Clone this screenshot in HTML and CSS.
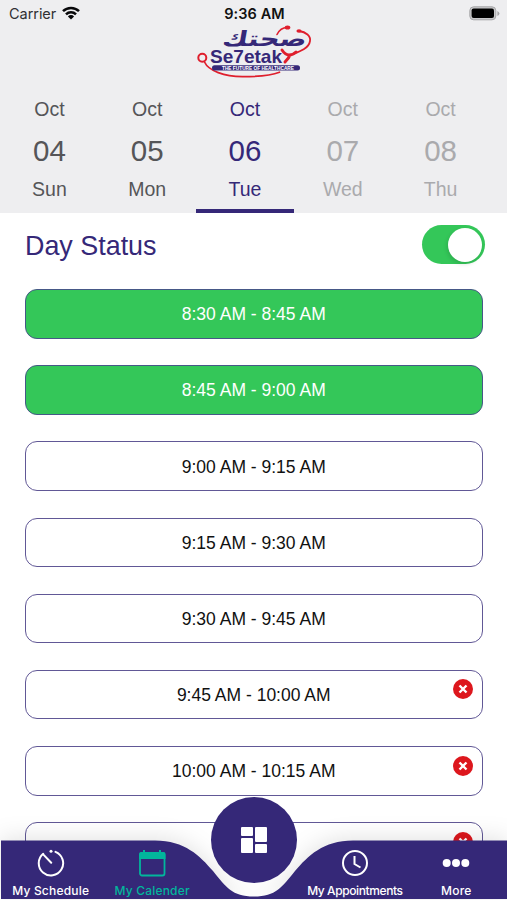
FILE: index.html
```html
<!DOCTYPE html>
<html lang="en">
<head>
<meta charset="utf-8">
<meta name="viewport" content="width=device-width, initial-scale=1">
<title>My Calender</title>
<link rel="stylesheet" href="styles.css">
</head>
<body>
<div class="screen">
  <header class="header">
    <div class="status">
      <div class="carrier">Carrier
        <svg width="18" height="14" viewBox="0 0 18 14"><g fill="none" stroke="#08080a" stroke-width="2.5"><path d="M1 5.2a11.3 11.3 0 0 1 16 0"/><path d="M4 8.3a7.1 7.1 0 0 1 10 0"/></g><path d="M5.9 10.4a4.4 4.4 0 0 1 6.2 0L9 13.6z" fill="#08080a"/></svg>
      </div>
      <div class="time">9:36 AM</div>
      <svg class="battery" width="31" height="15" viewBox="0 0 31 15"><rect x=".8" y=".8" width="26" height="13" rx="3.8" fill="#c9c9cb" stroke="#a5a5a7" stroke-width="1"/><rect x="2.6" y="2.6" width="22.4" height="9.4" rx="2" fill="#000"/><path d="M28.4 5v5q2-1 2-2.5T28.4 5" fill="#a5a5a7"/></svg>
    </div>
    <svg class="logo" width="130" height="60" viewBox="0 0 130 60">
      <g fill="none" stroke="#df1f2d" stroke-linecap="round">
        <path d="M97 7.500c-5 0-8 3-10 7" stroke-width="1.600"/>
        <path d="M109 11c7 1 12 5 11 10-1 7-9 10-17 13" stroke-width="1.800"/>
        <path d="M92 30c2 3 4 5 7 5 3 0 5-1 7-3M100 35c-1 3-3 5-5 7" stroke-width="3"/>
        <circle cx="12.300" cy="37.700" r="4" stroke-width="2"/>
        <path d="M14.500 42c4 9 20 14.500 38 14.700 14 0 28-1 37-4.500" stroke-width="1.700"/>
      </g>
      <ellipse cx="97.500" cy="7.500" rx="2.800" ry="2" fill="#df1f2d"/><ellipse cx="109" cy="11" rx="2.600" ry="1.800" fill="#df1f2d"/>
      <text class="logo-arabic" transform="translate(73.500 25.500) skewX(-10)" textLength="84" lengthAdjust="spacingAndGlyphs">صحتك</text>
      <text class="logo-name" x="20" y="43" textLength="72" lengthAdjust="spacingAndGlyphs">Se7etak</text>
      <rect x="22" y="45.200" width="88" height="5.400" rx="2.500" fill="#352878"/>
      <text class="logo-tag" x="32" y="49.700" textLength="72" lengthAdjust="spacingAndGlyphs">THE FUTURE OF HEALTHCARE</text>
    </svg>
    <nav class="days">
      <div class="day"><span>Oct</span><b>04</b><span>Sun</span></div>
      <div class="day"><span>Oct</span><b>05</b><span>Mon</span></div>
      <div class="day selected"><span>Oct</span><b>06</b><span>Tue</span></div>
      <div class="day muted"><span>Oct</span><b>07</b><span>Wed</span></div>
      <div class="day muted"><span>Oct</span><b>08</b><span>Thu</span></div>
    </nav>
  </header>
  <main class="content">
    <div class="day-status"><h1>Day Status</h1><div class="toggle"><i></i></div></div>
    <div class="slots">
      <div class="slot booked">8:30 AM - 8:45 AM</div>
      <div class="slot booked">8:45 AM - 9:00 AM</div>
      <div class="slot">9:00 AM - 9:15 AM</div>
      <div class="slot">9:15 AM - 9:30 AM</div>
      <div class="slot">9:30 AM - 9:45 AM</div>
      <div class="slot">9:45 AM - 10:00 AM<svg class="remove" viewBox="0 0 20 20"><circle cx="10" cy="10" r="10"/><path d="m6.500 6.500 7 7m0-7-7 7"/></svg></div>
      <div class="slot">10:00 AM - 10:15 AM<svg class="remove" viewBox="0 0 20 20"><circle cx="10" cy="10" r="10"/><path d="m6.500 6.500 7 7m0-7-7 7"/></svg></div>
      <div class="slot last"><svg class="remove" viewBox="0 0 20 20"><circle cx="10" cy="10" r="10"/><path d="m6.500 6.500 7 7m0-7-7 7"/></svg></div>
    </div>
  </main>
  <footer class="tabbar">
    <svg class="bar-shape" width="507" height="60" viewBox="0 0 507 60"><path d="M1 .5H155C185 .5 200 16 213 31C226 47 232 56.500 254 56.500C276 56.500 282 47 295 31C308 16 323 .5 353 .5H507V59H1Z" fill="#352878"/></svg>
    <div class="tabs">
      <div class="tab"><svg width="28" height="28" viewBox="0 0 28 28"><path d="M18.500 2.900A12.200 12.200 0 1 1 6.200 4.800M6.200 5.400l8 8.400" fill="none" stroke="#fff" stroke-width="2" stroke-linecap="round"/><circle cx="14" cy="2.200" r="1.500" fill="#fff"/></svg><span>My Schedule</span></div>
      <div class="tab active"><svg width="28" height="28" viewBox="0 0 28 28"><rect x="2" y="4" width="24.500" height="22.500" rx="2" fill="none" stroke="#02b69c" stroke-width="1.800"/><path d="M1.100 10V5q0-2 2-2H5V1h2v2h14V1h2v2h2.500q2 0 2 2v5z" fill="#02b69c"/></svg><span>My Calender</span></div>
      <div class="tab"></div>
      <div class="tab"><svg width="28" height="28" viewBox="0 0 28 28"><g fill="none" stroke="#fff" stroke-width="2"><circle cx="14" cy="14" r="12"/><path d="M13.500 7v8l6 3.500"/></g></svg><span class="tight">My Appointments</span></div>
      <div class="tab"><svg width="28" height="28" viewBox="0 0 28 28"><g fill="#fff"><circle cx="4.700" cy="14" r="4"/><circle cx="14" cy="14" r="4"/><circle cx="23.300" cy="14" r="4"/></g></svg><span>More</span></div>
    </div>
    <div class="hub"><svg width="28" height="28" viewBox="0 0 28 28"><g fill="#fff"><rect x="1" y="1" width="12" height="9" rx="1"/><rect x="1" y="12" width="12" height="15" rx="1"/><rect x="15" y="1" width="12" height="15" rx="1"/><rect x="15" y="18" width="12" height="9" rx="1"/></g></svg></div>
  </footer>
</div>
</body>
</html>
```
FILE: styles.css
```css
* { box-sizing: border-box; }
body { margin: 0; font-family: "Liberation Sans", Arial, sans-serif; background: #fff; }
svg { display: block; }
.screen { position: relative; width: 507px; height: 900px; overflow: hidden; }
.header { height: 213px; background: #eeeef0; display: flex; flex-direction: column; }
.status { height: 20px; padding: 6px 7px 0 9px; display: grid; grid-template-columns: 1fr auto 1fr; font: 14.500px/16px Inter, sans-serif; color: #303033; }
.carrier { display: flex; gap: 6px; letter-spacing: -.05px; }
.time { font-weight: 600; color: #111; letter-spacing: .1px; }
.battery { justify-self: end; }
.logo { margin-left: 190px; flex: none; }
.logo-arabic { font: bold 21px "DejaVu Sans", sans-serif; fill: #352878; text-anchor: middle; }
.logo-name { font: bold 19px "Liberation Sans", sans-serif; fill: #352878; }
.logo-tag { font: bold 5px "Liberation Sans", sans-serif; fill: #fff; }
.days { flex: 1; display: grid; grid-template-columns: repeat(5, 97.800px); padding-left: .5px; }
.day { display: flex; flex-direction: column; align-items: center; padding-top: 17px; color: #555558; font-size: 19.500px; line-height: 24px; border-bottom: 4px solid transparent; }
.day b { font-weight: 400; font-size: 29.500px; line-height: 34px; margin: 13px 0 9px; }
.day.selected { color: #352878; border-color: #352878; }
.day.muted { color: #aaaaad; }
.content { padding: 0 24.500px 0 25px; }
.day-status { height: 76px; display: flex; justify-content: space-between; padding-top: 12px; margin-right: -2px; }
h1 { margin: 4px 0 0; font-size: 26.900px; line-height: 34px; font-weight: 400; color: #352878; }
.toggle { width: 63px; height: 39px; border-radius: 20px; background: #34c759; padding: 2.500px; display: flex; justify-content: flex-end; }
.toggle i { width: 34px; height: 34px; border-radius: 50%; background: #fff; box-shadow: -1px 2px 4px #0002; }
.slots { display: grid; grid-auto-rows: 49.500px; gap: 26.700px; }
.slot { position: relative; display: flex; align-items: center; justify-content: center; padding-top: 2px; border: 1.500px solid #615896; border-radius: 12px; font-size: 17.500px; color: #111; }
.slot.booked { background: #34c759; color: #fff; border-color: #465887; }
.slot.last { height: 76px; }
.remove { position: absolute; right: 8.500px; top: 8.500px; width: 20px; height: 20px; fill: #dd171d; }
.remove path { stroke: #fff; stroke-width: 2.400; }
.tabbar { position: absolute; left: 0; right: 0; bottom: 0; height: 60px; }
.bar-shape { position: absolute; inset: 0; overflow: visible; filter: drop-shadow(0 -3px 11px #0000001c); }
.tabs { position: relative; height: 60px; display: grid; grid-template-columns: repeat(5, 1fr); }
.tab { display: flex; flex-direction: column; align-items: center; padding-top: 9px; color: #fff; font: 500 12px/15px Inter, sans-serif; white-space: nowrap; letter-spacing: .2px; }
.tab span { margin-top: 6px; }
.tab .tight { letter-spacing: -.4px; }
.tab.active { color: #02b69c; }
.hub { position: absolute; left: 211px; top: -43px; width: 86px; height: 86px; border-radius: 50%; background: #352878; display: flex; align-items: center; justify-content: center; }
```
